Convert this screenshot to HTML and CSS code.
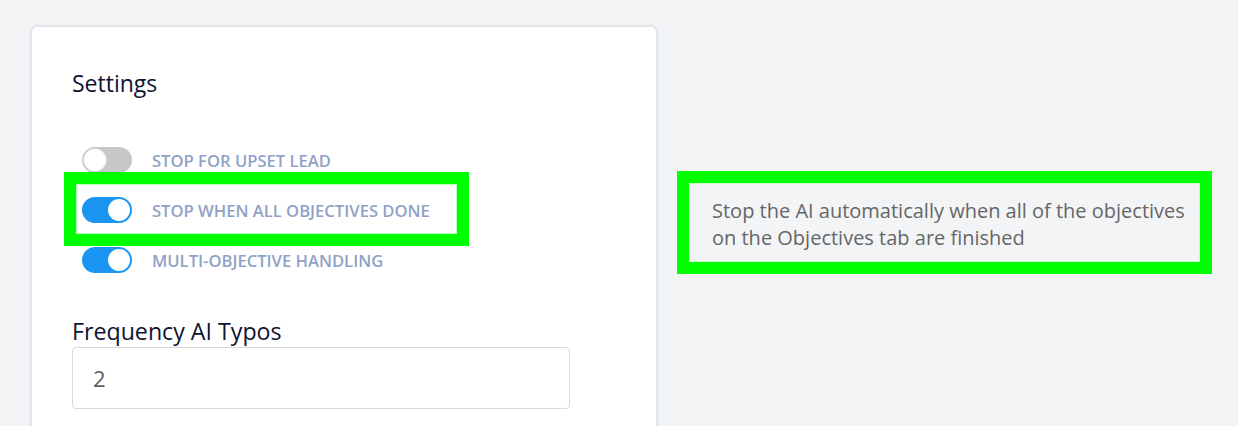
FILE: index.html
```html
<!DOCTYPE html>
<html>
<head>
<meta charset="utf-8">
<link rel="stylesheet" href="styles.css">
</head>
<body>
<div class="page">
  <section class="card">
    <h2 class="card-title">Settings</h2>
    <div class="toggles">
      <div class="toggle-row">
        <span class="switch switch-off"><span class="knob"></span></span>
        <span class="toggle-label">STOP FOR UPSET LEAD</span>
      </div>
      <div class="toggle-row highlighted">
        <span class="switch switch-on"><span class="knob"></span></span>
        <span class="toggle-label">STOP WHEN ALL OBJECTIVES DONE</span>
      </div>
      <div class="toggle-row">
        <span class="switch switch-on"><span class="knob"></span></span>
        <span class="toggle-label">MULTI-OBJECTIVE HANDLING</span>
      </div>
    </div>
    <label class="field-label">Frequency AI Typos</label>
    <div class="input">2</div>
  </section>
  <aside class="help">
    <p class="help-text">Stop the AI automatically when all of the objectives on the Objectives tab are finished</p>
  </aside>
</div>
</body>
</html>
```

FILE: styles.css
```css
*, *::before, *::after { box-sizing: border-box; }
html, body { margin: 0; padding: 0; }
body {
  background: #f3f4f6;
  font-family: "Open Sans", "Noto Sans", sans-serif;
  width: 1238px;
  height: 426px;
  overflow: hidden;
}
.page {
  display: flex;
  align-items: flex-start;
  padding: 26px 0 0 31px;
  height: 426px;
  overflow: hidden;
}
.card {
  width: 626px;
  height: 460px;
  background: #ffffff;
  border: 1px solid #dfe3ea;
  border-radius: 6px;
  box-shadow: 0 0 3px rgba(160, 175, 200, 0.45);
  padding: 42px 40px 0 40px;
  flex-shrink: 0;
}
.card-title {
  margin: 0;
  font-size: 23px;
  line-height: 28px;
  font-weight: 400;
  color: #0d1431;
}
.toggles {
  display: flex;
  flex-direction: column;
  gap: 24px;
  margin-top: 50px;
  padding-left: 10px;
}
.toggle-row {
  display: flex;
  align-items: center;
  gap: 20px;
  height: 26px;
  position: relative;
}
.toggle-row.highlighted::after {
  content: "";
  position: absolute;
  left: -18px;
  top: -25px;
  width: 405px;
  height: 74px;
  border: 12px solid #00ff00;
  box-shadow: inset 0 0 0 1px #b8ffb8;
}
.switch {
  width: 50px;
  height: 26px;
  border-radius: 13px;
  position: relative;
  flex-shrink: 0;
}
.switch-off { background: #c7c7c7; }
.switch-on { background: #1a95f2; }
.knob {
  position: absolute;
  top: 2px;
  width: 22px;
  height: 22px;
  border-radius: 50%;
  background: #ffffff;
}
.switch-off .knob { left: 2px; box-shadow: 0 0 0 1px #d6d6d6; }
.switch-on .knob { right: 2px; }
.toggle-label {
  font-size: 16.6px;
  font-weight: 600;
  color: #8fa2c6;
}
.field-label {
  display: block;
  margin-top: 44px;
  font-size: 23.2px;
  line-height: 28px;
  color: #0d1431;
}
.input {
  margin-top: 2px;
  width: 498px;
  height: 62px;
  border: 1px solid #d9d9d9;
  border-radius: 4px;
  padding: 0 20px;
  display: flex;
  align-items: center;
  font-size: 22px;
  color: #5f5f5f;
}
.help {
  margin-left: 20px;
  margin-top: 145px;
  width: 535px;
  height: 103px;
  border: 12px solid #00ff00;
  box-shadow: inset 0 0 0 1px #c8ffc8;
  padding: 14px 0 0 23px;
}
.help-text {
  margin: 0;
  font-size: 20px;
  line-height: 27px;
  color: #666666;
}
```
